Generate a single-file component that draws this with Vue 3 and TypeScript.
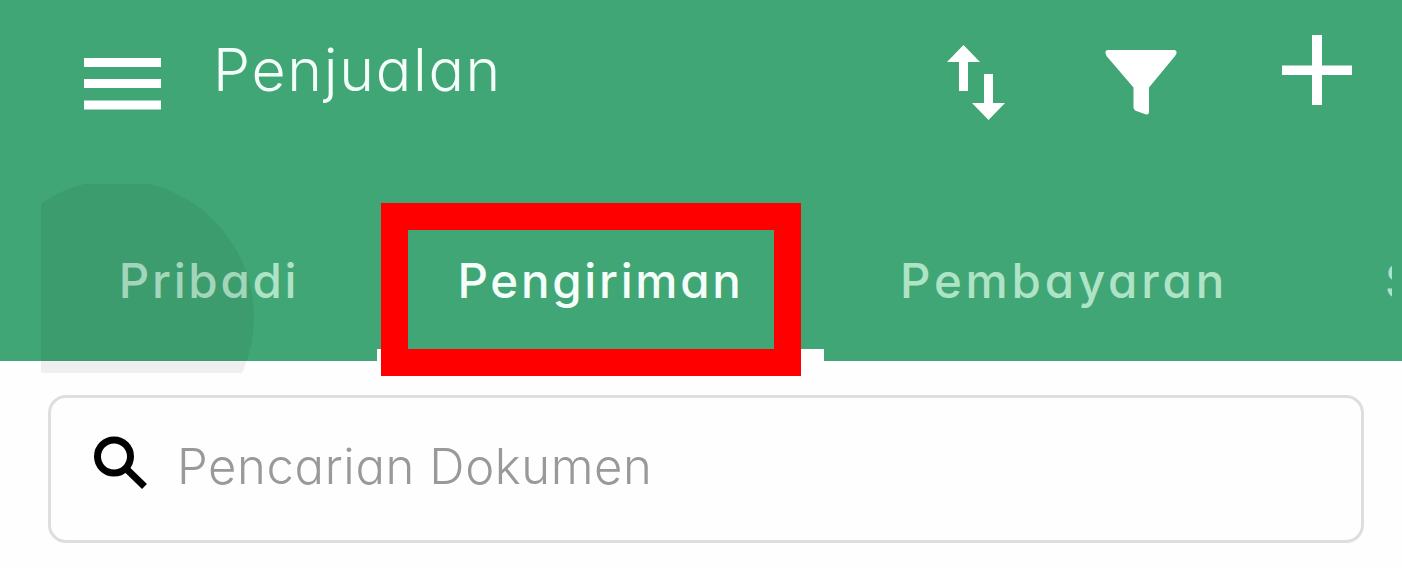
<script setup lang="ts">
import { ref } from 'vue'

interface Tab {
  key: string
  label: string
}

const tabs: Tab[] = [
  { key: 'pribadi', label: 'Pribadi' },
  { key: 'pengiriman', label: 'Pengiriman' },
  { key: 'pembayaran', label: 'Pembayaran' },
  { key: 'lainnya', label: 'S' }
]

const activeTab = ref('pengiriman')
const keyword = ref('')
</script>

<template>
  <div class="sales-page">
    <header class="app-header">
      <div class="toolbar">
        <button class="icon-button menu-button" aria-label="Menu">
          <svg width="78" height="54" viewBox="0 0 78 54">
            <path d="M0 1h77v9H0zM0 22h77v9H0zM0 43.500h77v9H0z" />
          </svg>
        </button>
        <h1 class="title">Penjualan</h1>
        <div class="actions">
          <button class="icon-button sort-button" aria-label="Urutkan">
            <svg width="60" height="78" viewBox="0 0 60 78">
              <path d="M17.500 1L34 18H22v29h-9V18H1zM38 30h9v29h12L42.500 76 26 59h12z" />
            </svg>
          </button>
          <button class="icon-button filter-button" aria-label="Filter">
            <svg width="72" height="68" viewBox="0 0 72 68">
              <path d="M3 2h66q3 0 2.500 3.500L70 8 44 39.500V64q0 3-3 2.500L30 62.500 28.500 60V39.500L1.500 8 .5 5.500Q0 2 3 2z" />
            </svg>
          </button>
          <button class="icon-button add-button" aria-label="Tambah">
            <svg width="70" height="70" viewBox="0 0 70 70">
              <path d="M30 0h10v30.500h30v9.500H40v30H30V40H0v-9.500h30z" />
            </svg>
          </button>
        </div>
      </div>

      <nav class="tabs">
        <button
          v-for="tab in tabs"
          :key="tab.key"
          class="tab"
          :class="[`tab-${tab.key}`, { active: tab.key === activeTab }]"
          @click="activeTab = tab.key"
        >
          <span class="tab-label">{{ tab.label }}</span>
        </button>
      </nav>
      <div class="ripple-area"><span class="ripple" /></div>
      <div class="highlight" />
    </header>

    <main class="content">
      <label class="search-box">
        <svg class="search-icon" width="56" height="56" viewBox="0 0 56 56">
          <circle cx="21" cy="20.500" r="16.500" />
          <path d="M34.500 34L51.500 50.500" />
        </svg>
        <input v-model="keyword" type="text" placeholder="Pencarian Dokumen">
      </label>
    </main>
  </div>
</template>

<style>
body {
  margin: 0;
  background: #fff;
}
</style>

<style scoped>
.sales-page {
  height: 568px;
  overflow: hidden;
  background: #fefefe;
  font-family: Inter, 'Liberation Sans', sans-serif;
  font-feature-settings: 'cv11';
}

.app-header {
  position: relative;
  height: 361px;
  background: #40a675;
}

.toolbar {
  display: flex;
  align-items: flex-start;
  height: 184px;
  padding: 0 50px 0 84px;
  box-sizing: border-box;
}

button {
  padding: 0;
  border: 0;
  background: none;
  font: inherit;
  font-feature-settings: inherit;
}

.icon-button svg {
  display: block;
  fill: #fff;
}

.menu-button {
  margin-top: 57px;
}

.title {
  margin: 34px 0 0 51px;
  color: #f4fffa;
  font-size: 59px;
  font-weight: 330;
  line-height: 72px;
  letter-spacing: 1.7px;
}

.actions {
  display: flex;
  align-items: flex-start;
  margin-left: auto;
}

.sort-button {
  margin: 44px 99px 0 0;
}

.filter-button {
  margin: 48px 105px 0 0;
}

.add-button {
  margin-top: 35px;
}

.tabs {
  display: flex;
  height: 177px;
  margin: 0 10px 0 41px;
  overflow: hidden;
}

.tab {
  display: flex;
  justify-content: center;
  flex: none;
  padding-top: 66px;
  box-sizing: border-box;
  border-bottom: 12px solid transparent;
  color: #aee3c6;
  font-size: 47.5px;
  font-weight: 450;
  line-height: 62px;
  letter-spacing: 2.7px;
}

.tab-pribadi {
  width: 336px;
}

.tab-pengiriman {
  width: 447px;
}

.tab-pembayaran {
  width: 478px;
  padding-left: 2px;
  letter-spacing: 3.8px;
}

.tab-lainnya {
  width: 90px;
  padding-left: 83px;
  justify-content: flex-start;
}

.tab.active {
  border-bottom-color: #fefefe;
  color: #f4fffa;
  font-weight: 500;
}

.ripple-area {
  position: absolute;
  top: 184px;
  left: 41px;
  width: 336px;
  height: 189px;
  overflow: hidden;
  pointer-events: none;
}

.ripple {
  position: absolute;
  top: -4px;
  left: -61px;
  width: 274px;
  height: 274px;
  border-radius: 50%;
  background: rgba(0, 0, 0, 0.06);
}

.highlight {
  position: absolute;
  top: 203px;
  left: 381px;
  width: 420px;
  height: 173px;
  box-sizing: border-box;
  border: 27px solid #f00;
  pointer-events: none;
}

.content {
  padding: 34px 38px 0 48px;
}

.search-box {
  display: flex;
  align-items: flex-start;
  height: 148px;
  padding: 38px 40px 0 42px;
  box-sizing: border-box;
  border: 3px solid #dedede;
  border-radius: 18px;
}

.search-icon {
  flex: none;
  fill: none;
  stroke: #000;
  stroke-width: 7;
}

.search-box input {
  flex: 1;
  min-width: 0;
  height: 62px;
  margin: -1px 0 0 28px;
  padding: 0;
  border: 0;
  outline: 0;
  background: none;
  font-family: inherit;
  font-feature-settings: inherit;
  font-size: 49px;
  font-weight: 300;
  letter-spacing: 0.6px;
}

.search-box input::placeholder {
  color: #999;
  opacity: 1;
}
</style>
